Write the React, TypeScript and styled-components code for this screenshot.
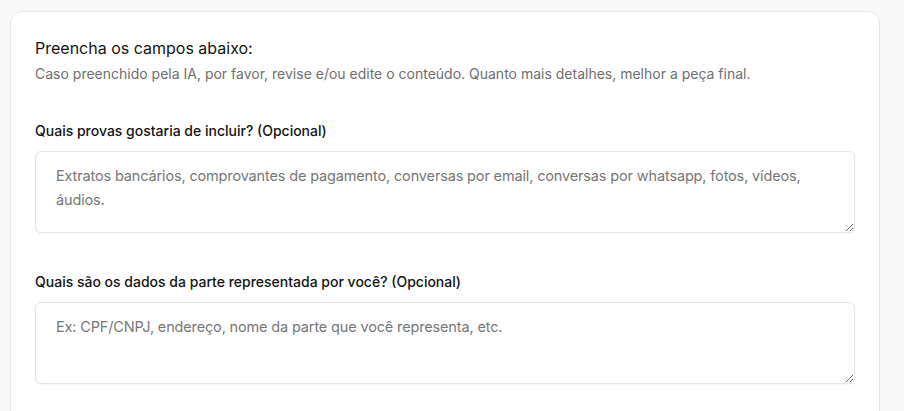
import React from "react";
import styled, { createGlobalStyle } from "styled-components";

const GlobalStyle = createGlobalStyle`
  html, body {
    margin: 0;
    padding: 0;
    background: #f8f8f8;
    font-family: Inter, "Noto Sans", "Liberation Sans", sans-serif;
  }
  * { box-sizing: border-box; }
`;

const Page = styled.div`
  padding: 11px 24px 0 10px;
  height: 411px;
  overflow: hidden;
`;

const Card = styled.div`
  width: 870px;
  background: #ffffff;
  border: 1px solid #e8e8e8;
  border-radius: 12px;
  padding: 24px 24px 40px;
  display: flex;
  flex-direction: column;
`;

const Title = styled.h2`
  margin: 0;
  font-size: 16px;
  line-height: 24px;
  font-weight: 400;
  color: #141414;
`;

const Subtitle = styled.p`
  margin: 4px 0 0;
  font-size: 14px;
  line-height: 20px;
  color: #6f6f6f;
`;

const Fields = styled.div`
  display: flex;
  flex-direction: column;
  gap: 39px;
  margin-top: 37px;
`;

const Field = styled.div`
  display: flex;
  flex-direction: column;
  gap: 10px;
`;

const Label = styled.label`
  font-size: 14px;
  line-height: 20px;
  font-weight: 500;
  color: #141414;
`;

const TextArea = styled.textarea`
  width: 100%;
  height: 82px;
  border: 1px solid #e6e6e6;
  border-radius: 6px;
  padding: 12px 20px;
  font-family: inherit;
  font-size: 14.5px;
  letter-spacing: -0.15px;
  line-height: 24px;
  color: #141414;
  background: #ffffff;
  box-shadow: 0 1px 2px rgba(0, 0, 0, 0.04);
  resize: vertical;
  outline: none;
  &::placeholder {
    color: #777777;
  }
`;

export default function App() {
  return (
    <>
      <GlobalStyle />
      <Page>
        <Card>
          <Title>Preencha os campos abaixo:</Title>
          <Subtitle>
            Caso preenchido pela IA, por favor, revise e/ou edite o conteúdo. Quanto mais detalhes, melhor a peça final.
          </Subtitle>
          <Fields>
            <Field>
              <Label>Quais provas gostaria de incluir? (Opcional)</Label>
              <TextArea placeholder="Extratos bancários, comprovantes de pagamento, conversas por email, conversas por whatsapp, fotos, vídeos, áudios." />
            </Field>
            <Field>
              <Label>Quais são os dados da parte representada por você? (Opcional)</Label>
              <TextArea placeholder="Ex: CPF/CNPJ, endereço, nome da parte que você representa, etc." />
            </Field>
          </Fields>
        </Card>
      </Page>
    </>
  );
}
